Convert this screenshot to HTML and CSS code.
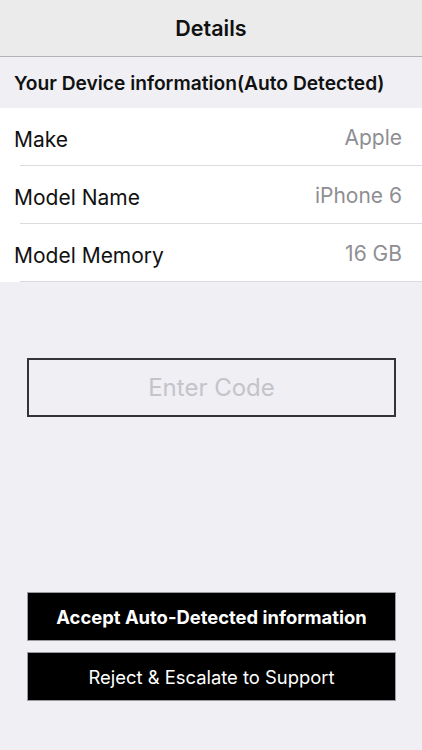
FILE: index.html
```html
<!DOCTYPE html>
<html lang="en">
<head>
<meta charset="utf-8">
<title>Details</title>
<link rel="stylesheet" href="styles.css">
</head>
<body>
<div class="screen">
  <header class="navbar"><h1 class="nav-title">Details</h1></header>
  <div class="section-header">Your Device information(Auto Detected)</div>
  <ul class="table">
    <li class="row"><span class="label">Make</span><span class="value">Apple</span></li>
    <li class="row"><span class="label">Model Name</span><span class="value">iPhone 6</span></li>
    <li class="row"><span class="label">Model Memory</span><span class="value">16 GB</span></li>
  </ul>
  <div class="code-wrap">
    <input class="code-input" type="text" placeholder="Enter Code">
  </div>
  <div class="actions">
    <button class="btn btn-bold">Accept Auto-Detected information</button>
    <button class="btn">Reject &amp; Escalate to Support</button>
  </div>
</div>
</body>
</html>
```
FILE: styles.css
```css
* { box-sizing: border-box; }
html, body { margin: 0; padding: 0; }
body {
  background: #efeff4;
  font-family: "Inter", "Liberation Sans", Arial, sans-serif;
  color: #000;
}
.screen {
  width: 422px;
  height: 750px;
  display: flex;
  flex-direction: column;
  background: #efeff4;
}
.navbar {
  height: 57px;
  background: #ebebeb;
  border-bottom: 1px solid #b3b3b3;
  display: flex;
  align-items: center;
  justify-content: center;
}
.nav-title {
  margin: 0;
  font-size: 21.5px;
  font-weight: 600;
  color: #111;
}
.section-header {
  height: 51px;
  padding-left: 14px;
  display: flex;
  align-items: center;
  font-size: 19.2px;
  font-weight: 600;
  color: #111;
}
.table {
  list-style: none;
  margin: 0;
  padding: 0;
  background: #fff;
}
.row {
  height: 58px;
  margin-left: 20px;
  padding-right: 20px;
  display: flex;
  align-items: center;
  justify-content: space-between;
  border-bottom: 1px solid #dcdce0;
}
.label {
  margin-left: -6px;
  font-size: 21px;
  color: #111;
  padding-top: 6px;
}
.value {
  font-size: 21px;
  color: #8e8e93;
  padding-top: 1px;
}
.code-wrap {
  padding: 76px 26px 0 27px;
}
.code-input {
  display: block;
  width: 100%;
  height: 59px;
  border: 2px solid #333338;
  background: transparent;
  font-family: inherit;
  font-size: 24px;
  text-align: center;
  color: #111;
  outline: none;
  padding: 0;
}
.code-input::placeholder { color: #c4c4c9; }
.actions {
  margin-top: auto;
  padding: 0 26px 49px 27px;
  display: flex;
  flex-direction: column;
  gap: 11px;
}
.btn {
  height: 49px;
  width: 100%;
  background: #000;
  color: #fff;
  border: 1px solid #9a9aa0;
  font-family: inherit;
  font-size: 18.4px;
  font-weight: 400;
  padding: 0;
}
.btn-bold { font-weight: 700; }
```
